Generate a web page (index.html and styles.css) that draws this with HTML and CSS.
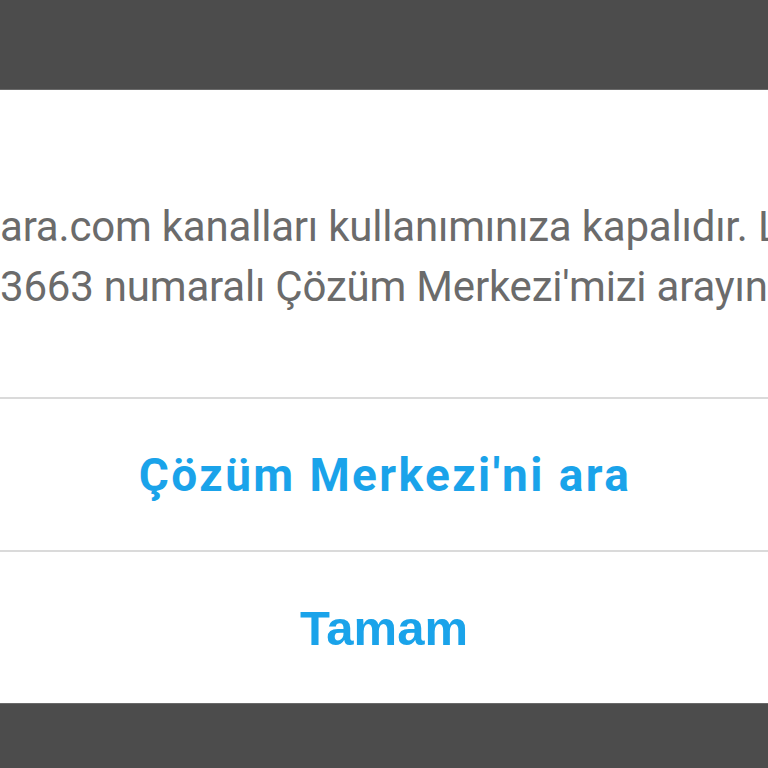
FILE: index.html
```html
<!DOCTYPE html>
<html lang="tr">
<head>
<meta charset="utf-8">
<title>Uyarı</title>
<link rel="stylesheet" href="styles.css">
</head>
<body>
<div class="screen">
  <div class="shade top"></div>
  <div class="dialog">
    <div class="message">
      <div class="line line-1">ara.com kanalları kullanımınıza kapalıdır. Lütfen</div>
      <div class="line line-2">3663 numaralı Çözüm Merkezi'mizi arayınız.</div>
    </div>
    <div class="divider"></div>
    <button class="action action-call">Çözüm Merkezi'ni ara</button>
    <div class="divider"></div>
    <button class="action action-ok">Tamam</button>
  </div>
  <div class="shade bottom"></div>
</div>
</body>
</html>
```
FILE: styles.css
```css
* { box-sizing: border-box; }
html, body {
  margin: 0;
  padding: 0;
  width: 768px;
  height: 768px;
  overflow: hidden;
  background: #4c4c4c;
}
.screen {
  display: flex;
  flex-direction: column;
  width: 768px;
  height: 768px;
}
.shade {
  background: #4c4c4c;
  flex: none;
}
.shade.top { height: 90px; border-bottom: 1px solid #6a6a6a; }
.shade.bottom { height: 65px; border-top: 1px solid #6a6a6a; }
.dialog {
  flex: 1;
  background: #ffffff;
  display: flex;
  flex-direction: column;
  overflow: hidden;
}
.message {
  height: 307px;
  padding-top: 107px;
  font-family: Roboto, "Noto Sans", sans-serif;
  font-size: 42px;
  line-height: 60px;
  letter-spacing: -0.2px;
  color: #6b6b6b;
  overflow: hidden;
}
.line {
  white-space: nowrap;
}
.divider {
  height: 2px;
  background: #dadada;
  flex: none;
}
.action {
  flex: none;
  height: 151px;
  border: 0;
  background: #ffffff;
  color: #1aa3ea;
  font-weight: 700;
  display: flex;
  align-items: center;
  justify-content: center;
  padding: 0;
  margin: 0;
}
.action-call {
  font-family: Roboto, "Noto Sans", sans-serif;
  font-size: 46px;
  letter-spacing: 2.4px;
  padding-left: 2px;
}
.action-ok {
  font-family: "Liberation Sans", Arial, sans-serif;
  font-size: 49px;
}
```
